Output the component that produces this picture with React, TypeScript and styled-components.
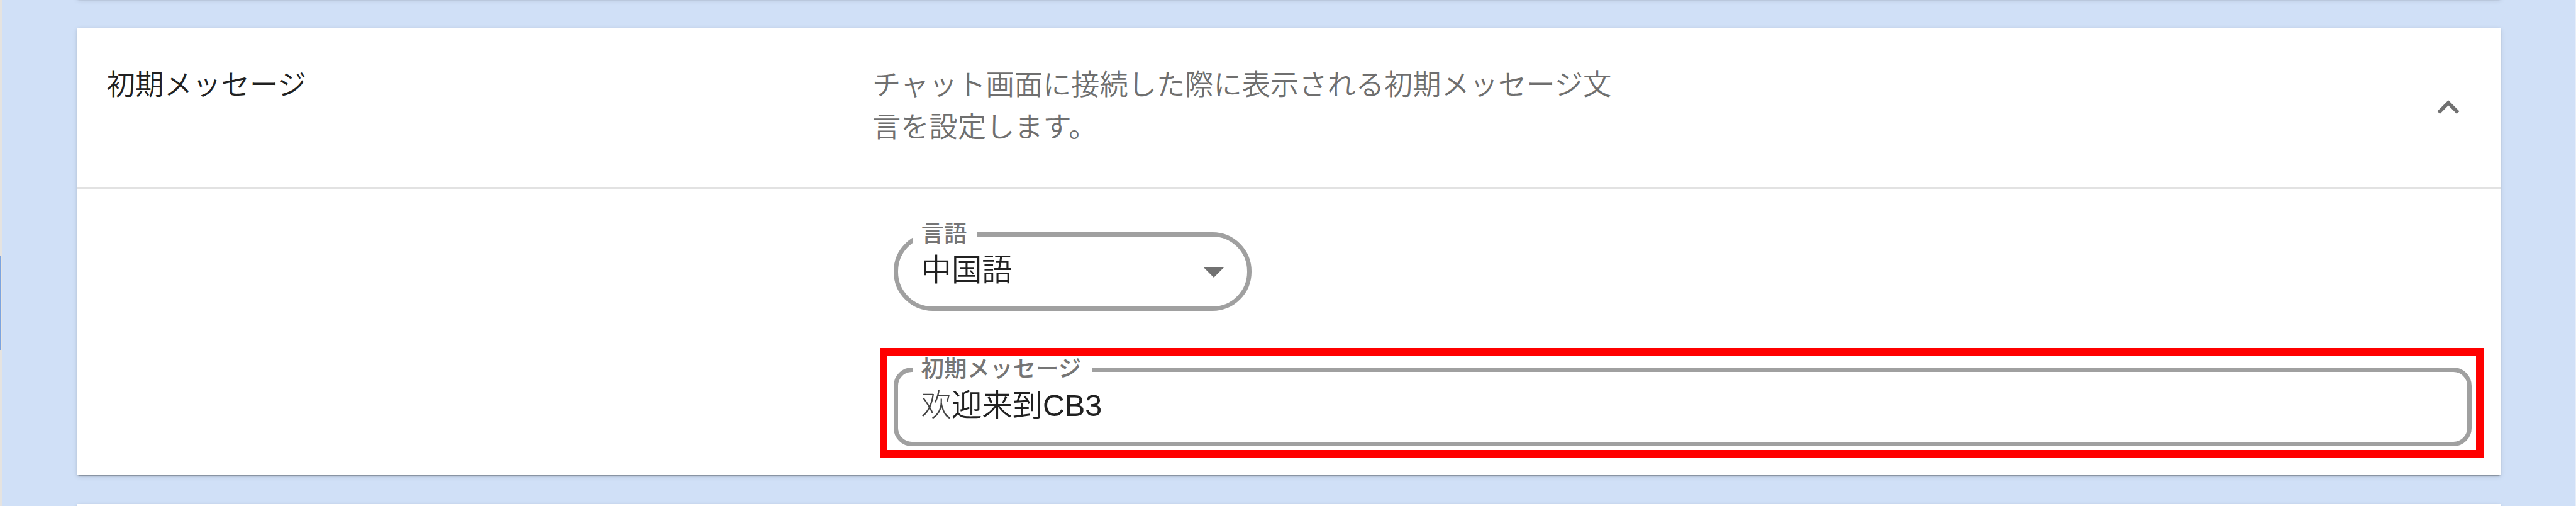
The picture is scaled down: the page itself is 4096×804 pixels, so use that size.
import React, { useState } from 'react'
import styled, { createGlobalStyle } from 'styled-components'

const GlobalStyle = createGlobalStyle`
    *{
        box-sizing: border-box;
    }

    body{
        margin: 0;
        overflow: hidden;
        background-color: #d0e0f7;
        font-family: "Liberation Sans", "Noto Sans CJK JP", sans-serif;
        font-weight: 350;
    }
`

const shadow = `
    0 4px 2px -2px rgba(0, 0, 0, 0.3),
    0 2px 3px 0 rgba(0, 0, 0, 0.16),
    0 2.5px 8.5px 0 rgba(0, 0, 0, 0.12)
`

const SPage = styled.div`
    display: flex;
    width: 4096px;
    height: 804px;
    overflow: hidden;
    border-right: 1px solid #e6eefa;
`
const SRail = styled.div`
    display: flex;
    flex-direction: column;
    width: 3px;
    padding-top: 407px;
    background-color: #e5e3e0;
`
const SRailThumb = styled.div`
    width: 1px;
    height: 149px;
    background-color: #7aa3e0;
`
const SList = styled.div`
    flex: 1;
    display: flex;
    flex-direction: column;
    gap: 47px;
    padding: 0 119.5px;
    margin-top: -103px;
`
const SCard = styled.section<{ $height: number }>`
    flex: none;
    height: ${props => props.$height}px;
    background-color: #fff;
    box-shadow: ${shadow};
`
const SHeader = styled.header`
    display: flex;
    height: 256px;
    padding: 58px 48px 0 47px;
    border-bottom: 3px solid #e2e2e2;
    font-size: 45.25px;
    line-height: 67px;
`
const STitle = styled.div`
    width: 1217.5px;
    font-size: 45.5px;
    color: #212121;
`
const SDescription = styled.div`
    width: 1190px;
    color: #6f6f6f;
`
const SToggle = styled.button`
    width: 70px;
    height: 70px;
    margin: 34px 0 0 auto;
    padding: 0;
    border: 0;
    background: none;
    color: #717171;
    svg{
        display: block;
        width: 70px;
        height: 70px;
    }
`
const SBody = styled.div`
    display: flex;
    flex-direction: column;
    align-items: flex-start;
    gap: 58.5px;
    padding: 54px 26.5px 0 1276px;
`
const SLanguage = styled.div`
    width: 591px;
    padding-left: 22.5px;
`
const SMark = styled.div`
    width: 2550.5px;
    height: 174px;
    padding: 4.5px 7.5px 0 10.5px;
    border: 12px solid #f00;
`
const SField = styled.fieldset<{ $round: number }>`
    display: flex;
    align-items: flex-start;
    height: 140px;
    min-width: 0;
    margin: 0;
    padding: 0 0 0 23px;
    border: 7px solid #a0a0a0;
    border-radius: ${props => props.$round}px;
`
const SLegend = styled.legend<{ $width: number }>`
    width: ${props => props.$width}px;
    height: 37px;
    padding: 0 0 0 13.5px;
    font-size: 36.5px;
    font-weight: 500;
    line-height: 36px;
    white-space: nowrap;
    color: #757575;
`
const SValue = styled.div`
    padding: 10px 0 0 13.5px;
    font-size: 48.4px;
    line-height: 56px;
    color: #212121;
`
const SThin = styled.span`
    font-weight: 200;
    color: #444;
`
const SArrow = styled.svg`
    width: 32px;
    height: 16px;
    margin: 33.5px 37px 0 auto;
    fill: #717171;
`

type FieldProps = {
    label: string
    value: React.ReactNode
    round: number
    notch: number
    select?: boolean
}

const Field = ({ label, value, round, notch, select }: FieldProps) => (
    <SField $round={round}>
        <SLegend $width={notch}>{label}</SLegend>
        <SValue>{value}</SValue>
        {select && <SArrow viewBox="0 0 32 16"><path d="M0 0h32L16 16z" /></SArrow>}
    </SField>
)

const App = () => {
    const [open, setOpen] = useState(true)

    return (
        <SPage>
            <GlobalStyle />
            <SRail>
                <SRailThumb />
            </SRail>
            <SList>
                <SCard $height={100} />
                <SCard $height={710}>
                    <SHeader>
                        <STitle>初期メッセージ</STitle>
                        <SDescription>チャット画面に接続した際に表示される初期メッセージ文言を設定します。</SDescription>
                        <SToggle onClick={() => setOpen(!open)}>
                            <svg viewBox="0 0 24 24" fill="currentColor"><path d="M12 8l-6 6 1.41 1.41L12 10.83l4.59 4.58L18 14z" /></svg>
                        </SToggle>
                    </SHeader>
                    {open && (
                        <SBody>
                            <SLanguage>
                                <Field label="言語" value="中国語" round={62} notch={103} select />
                            </SLanguage>
                            <SMark>
                                <Field label="初期メッセージ" value={<><SThin>欢</SThin>迎来到CB3</>} round={29} notch={285} />
                            </SMark>
                        </SBody>
                    )}
                </SCard>
                <SCard $height={100} />
            </SList>
        </SPage>
    )
}

export default App
